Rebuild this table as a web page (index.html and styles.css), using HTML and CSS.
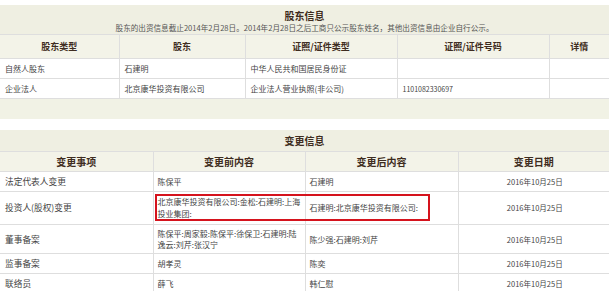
FILE: index.html
```html
<!DOCTYPE html>
<html lang="zh-CN">
<head>
<meta charset="utf-8">
<title>股东信息</title>
<link rel="stylesheet" href="styles.css">
</head>
<body>
<section class="block block-first">
  <table class="grid">
    <colgroup><col style="width:119px"><col style="width:126px"><col style="width:152px"><col style="width:152px"><col style="width:60px"></colgroup>
    <thead>
      <tr class="title-row"><th colspan="5"><div class="title">股东信息</div><div class="sub">股东的出资信息截止2014年2月28日。2014年2月28日之后工商只公示股东姓名，其他出资信息由企业自行公示。</div></th></tr>
      <tr class="head-row"><th>股东类型</th><th>股东</th><th>证照/证件类型</th><th>证照/证件号码</th><th>详情</th></tr>
    </thead>
    <tbody>
      <tr><td>自然人股东</td><td>石建明</td><td>中华人民共和国居民身份证</td><td></td><td></td></tr>
      <tr><td>企业法人</td><td>北京康华投资有限公司</td><td>企业法人营业执照(非公司)</td><td class="num">1101082330697</td><td></td></tr>
      <tr class="foot-row"><td colspan="5"></td></tr>
    </tbody>
  </table>
</section>
<section class="block block-second">
  <table class="grid grid2">
    <colgroup><col style="width:153px"><col style="width:152px"><col style="width:153px"><col style="width:151px"></colgroup>
    <thead>
      <tr class="title-row2"><th colspan="4"><div class="title">变更信息</div></th></tr>
      <tr class="head-row2"><th>变更事项</th><th>变更前内容</th><th>变更后内容</th><th>变更日期</th></tr>
    </thead>
    <tbody>
      <tr><td class="item">法定代表人变更</td><td>陈保平</td><td>石建明</td><td class="date">2016年10月25日</td></tr>
      <tr class="tall"><td class="item">投资人(股权)变更</td><td>北京康华投资有限公司:金松:石建明:上海<br>投业集团:</td><td>石建明:北京康华投资有限公司:</td><td class="date">2016年10月25日</td></tr>
      <tr class="tall2"><td class="item">董事备案</td><td>陈保平:周家毅:陈保平:徐保卫:石建明:陆<br>逸云:刘芹:张汉宁</td><td>陈少强:石建明:刘芹</td><td class="date">2016年10月25日</td></tr>
      <tr><td class="item">监事备案</td><td>胡孝灵</td><td>陈奕</td><td class="date">2016年10月25日</td></tr>
      <tr><td class="item">联络员</td><td>薛飞</td><td>韩仁慰</td><td class="date">2016年10月25日</td></tr>
    </tbody>
  </table>
  <div class="mark"></div>
</section>
</body>
</html>
```
FILE: styles.css
```css
html, body {
  margin: 0;
  padding: 0;
  background: #fff;
}
body {
  width: 609px;
  height: 291px;
  overflow: hidden;
  font-family: "Noto Sans CJK SC", "DejaVu Sans", sans-serif;
  font-size: 8px;
  color: #444;
}
.block {
  position: relative;
}
.block-first {
  padding-top: 5px;
}
.block-second {
  margin-top: 11px;
}
.grid {
  width: 609px;
  border-collapse: collapse;
  table-layout: fixed;
}
.grid th,
.grid td {
  border: 1px solid #dedede;
  padding: 0 5px;
  line-height: 12px;
  text-align: left;
  vertical-align: middle;
  overflow: hidden;
}
.grid2 td {
  padding: 0 2px 0 4px;
  white-space: nowrap;
}
.grid tr:first-child th { border-top: none; }
.grid th:first-child, .grid td:first-child { border-left: none; }
.grid th:last-child, .grid td:last-child { border-right: none; }
.title-row th,
.title-row2 th {
  background: #efefe2;
  text-align: center;
  font-weight: normal;
}
.title-row th { height: 27px; padding-top: 2px; }
.title-row2 th { height: 21px; }
.title {
  font-size: 10px;
  font-weight: bold;
  color: #3e2c20;
  line-height: 13px;
}
.sub {
  font-size: 7.6px;
  color: #555;
  line-height: 11px;
}
.head-row th,
.head-row2 th {
  background: #f3f3e8;
  text-align: center;
  font-size: 9px;
  font-weight: bold;
  color: #3e2c20;
}
.head-row th { height: 23px; }
.head-row2 th { height: 19px; font-size: 10px; }
.grid td { height: 19px; }
.foot-row td {
  background: #f1f2e5;
  height: 20px;
  border-bottom: none;
}
.num { font-size: 7px; }
.grid2 td.item { font-size: 8.7px; padding-left: 5px; }
.grid2 td.date { text-align: center; font-size: 7.5px; }
.grid2 .tall td { height: 32px; line-height: 12px; }
.grid2 .tall2 td { height: 28px; line-height: 11px; }
.mark {
  position: absolute;
  left: 155px;
  top: 64px;
  width: 271px;
  height: 23px;
  border: 2px solid #d5131d;
}
```
